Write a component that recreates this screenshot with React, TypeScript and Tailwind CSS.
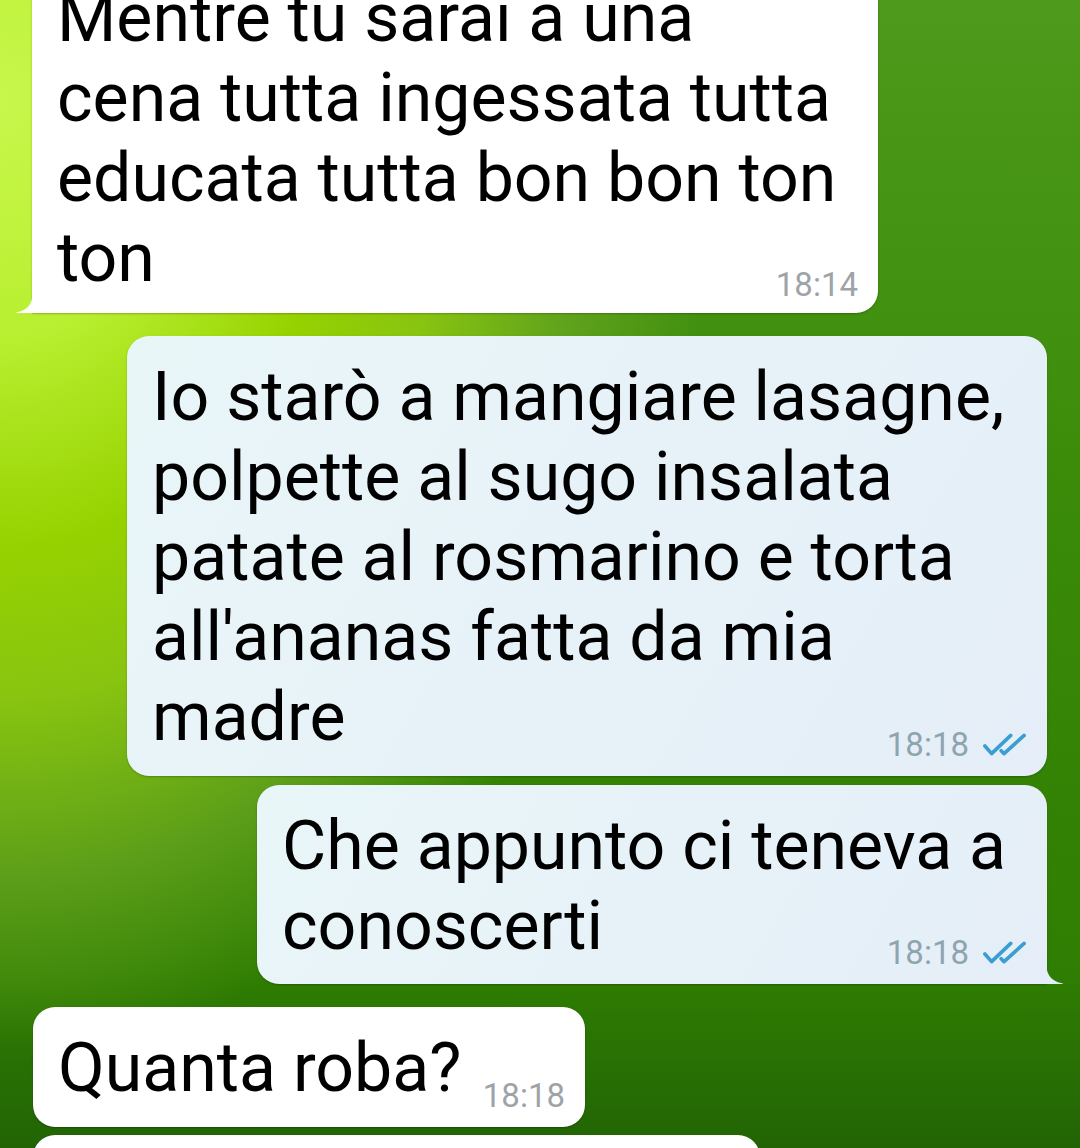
import React from 'react'

type Msg = {
    out: boolean
    lines: string[]
    time: string
    tail?: boolean
    box: string
    stamp: string
}

const messages: Msg[] = [
    {
        out: false,
        lines: ['Mentre tu sarai a una', 'cena tutta ingessata tutta', 'educata tutta bon bon ton', 'ton'],
        time: '18:14',
        tail: true,
        box: 'self-start ml-[32px] w-[846px] -mt-[43px] rounded-bl-none pb-[15px]',
        stamp: 'bottom-[12px]',
    },
    {
        out: true,
        lines: [
            'Io starò a mangiare lasagne,',
            'polpette al sugo insalata',
            'patate al rosmarino e torta',
            "all'ananas fatta da mia",
            'madre',
        ],
        time: '18:18',
        box: 'self-end mr-[33px] w-[920px] mt-[23px] pb-[19px]',
        stamp: 'bottom-[15px]',
    },
    {
        out: true,
        lines: ['Che appunto ci teneva a', 'conoscerti'],
        time: '18:18',
        tail: true,
        box: 'self-end mr-[33px] w-[790px] mt-[9px] rounded-br-none pb-[18px]',
        stamp: 'bottom-[15px]',
    },
    {
        out: false,
        lines: ['Quanta roba?'],
        time: '18:18',
        box: 'self-start ml-[33px] w-[552px] mt-[23px] pb-[19px]',
        stamp: 'bottom-[15px]',
    },
]

function Ticks() {
    return (
        <svg viewBox="0 0 46 24" className="w-[44px] h-[24px]" fill="none" stroke="#3a9fd0" strokeWidth={3.8} strokeLinecap="round" strokeLinejoin="round">
            <path d="M2 13 L9 21 L29 2" />
            <path d="M19 18 L22 21 L43 2" />
        </svg>
    )
}

function Bubble({ msg }: { msg: Msg }) {
    const bg = msg.out ? 'bg-[linear-gradient(120deg,#e9f6f8_0%,#e5eef8_100%)]' : 'bg-white'
    return (
        <div className={`relative ${msg.box} ${bg} rounded-[22px] pl-[25px] pr-[20px] pt-[21px] shadow-[0_1px_2px_rgba(0,0,0,0.25)]`}>
            {msg.lines.map((line, i) => (
                <div key={i} className="text-[68px] leading-[80px] text-black whitespace-nowrap">
                    {line}
                </div>
            ))}
            <div className={`absolute right-[20px] ${msg.stamp} flex items-center gap-[14px] text-[33px] leading-[32px] ${msg.out ? 'text-[#8ea5b0]' : 'text-[#9ea3a8]'}`}>
                <span>{msg.time}</span>
                {msg.out && <Ticks />}
            </div>
            {msg.tail && !msg.out && (
                <svg viewBox="0 0 18 24" className="absolute -left-[17px] bottom-0 w-[18px] h-[24px]">
                    <path d="M18 0 C18 14 14 21 2 23.2 Q0 23.8 2 24 L18 24 Z" fill="#ffffff" />
                </svg>
            )}
            {msg.tail && msg.out && (
                <svg viewBox="0 0 18 24" className="absolute -right-[17px] bottom-0 w-[18px] h-[24px]">
                    <path d="M0 0 C0 14 4 21 16 23.2 Q18 23.8 16 24 L0 24 Z" fill="#e5eef8" />
                </svg>
            )}
        </div>
    )
}

export default function App() {
    return (
        <div className="w-[1080px] h-[1148px] overflow-hidden font-['Roboto','Noto_Sans',sans-serif] bg-[radial-gradient(ellipse_720px_950px_at_0px_100px,#c8f74c_0%,#b8ef30_25%,#96d200_47%,#88c410_63%,rgba(106,168,32,0.75)_82%,rgba(60,140,10,0)_100%),linear-gradient(180deg,#4e9a1c_0%,#3c8c0a_40%,#2f7d02_85%,#226405_100%)]">
            <div className="flex flex-col">
                {messages.map((m, i) => (
                    <Bubble key={i} msg={m} />
                ))}
                <div className="self-start ml-[33px] mt-[8px] w-[727px] h-[120px] bg-white rounded-[22px] shadow-[0_1px_2px_rgba(0,0,0,0.25)]" />
            </div>
        </div>
    )
}
